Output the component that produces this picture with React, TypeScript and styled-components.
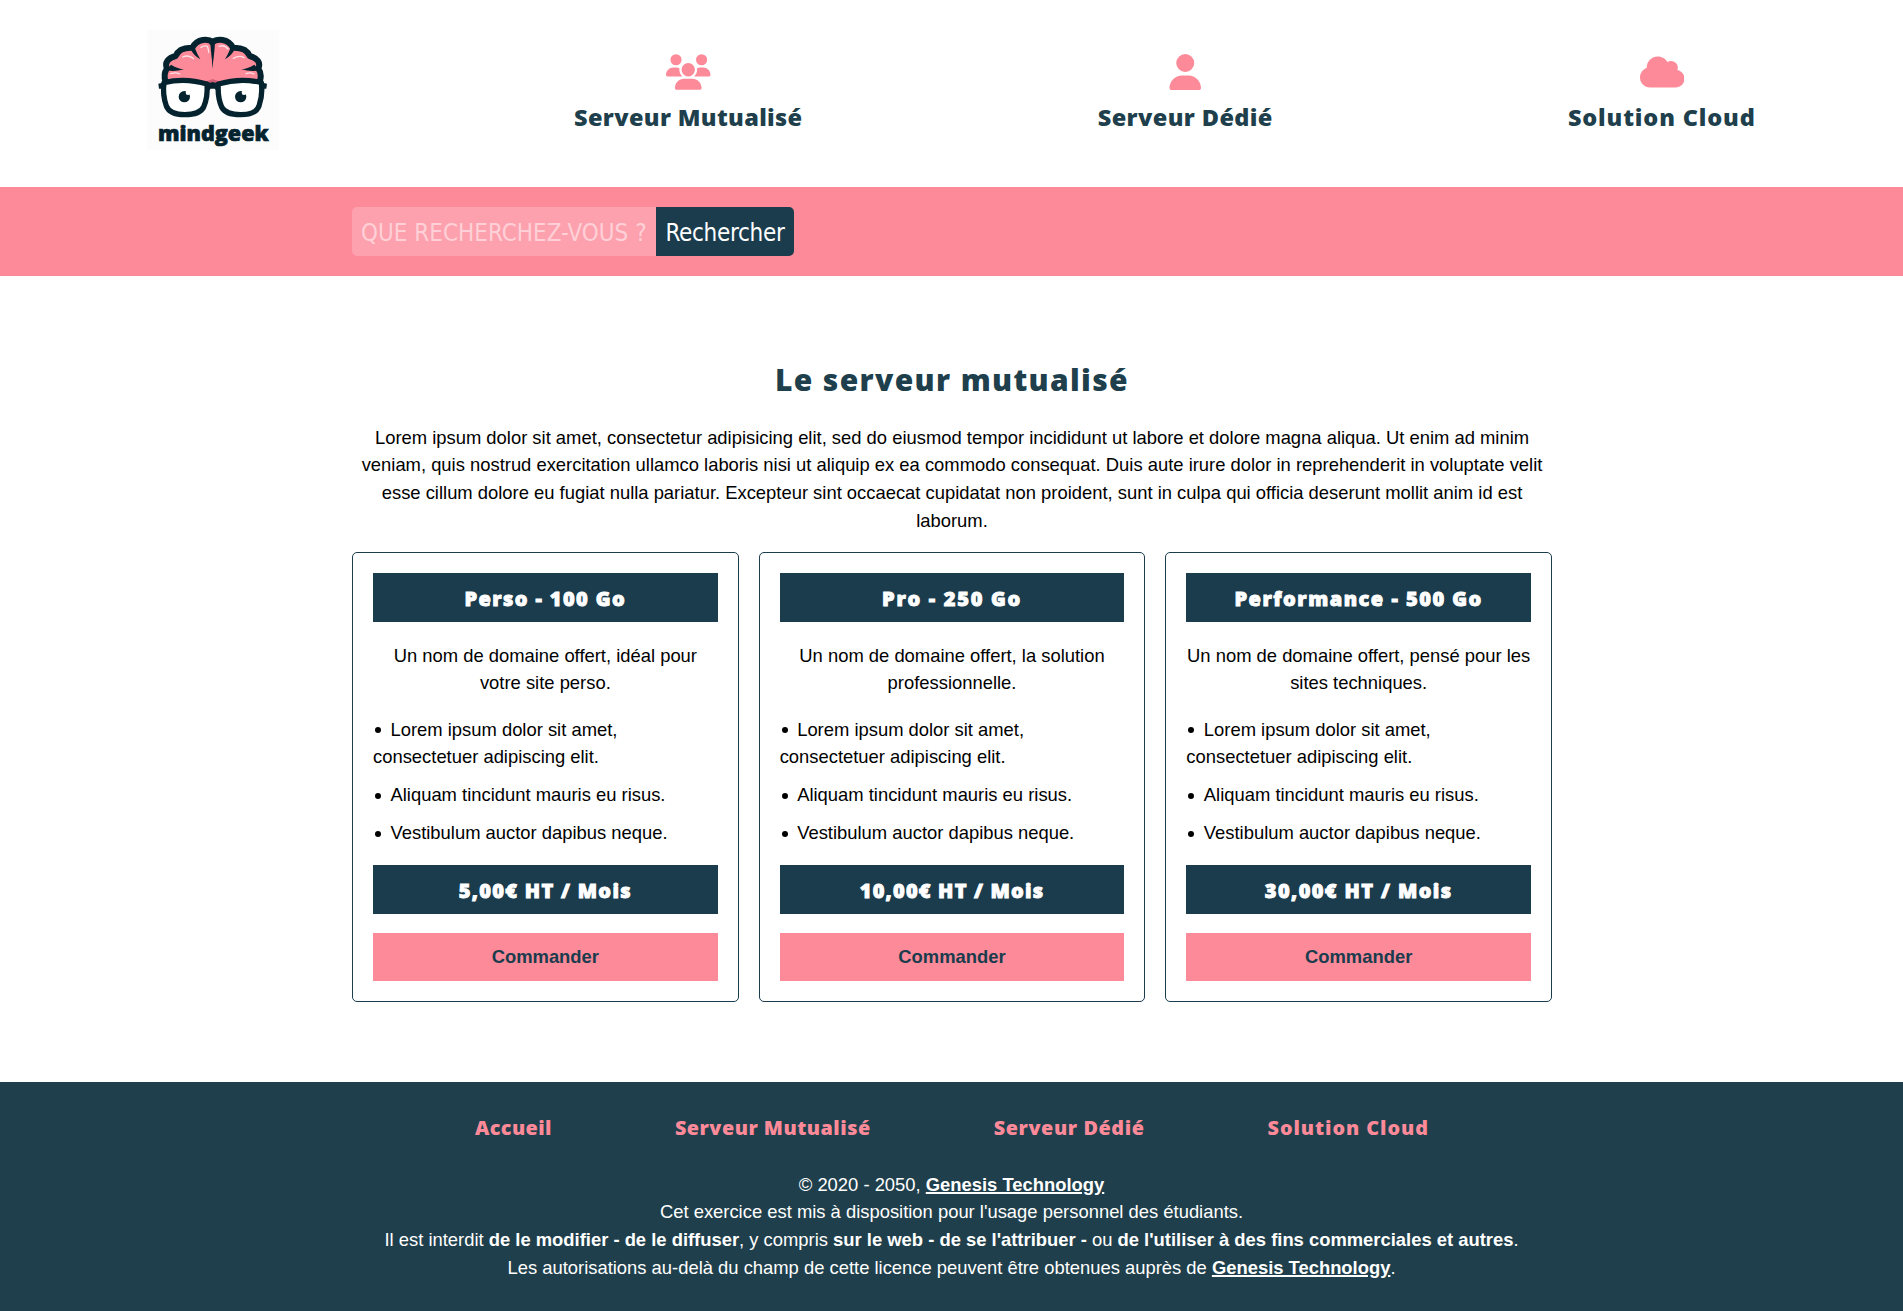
import React from "react";
import styled, { createGlobalStyle } from "styled-components";
import { FaUsers, FaUser, FaCloud } from "react-icons/fa6";

const pink = "#fc8a99";
const navy = "#1a3c4d";
const slate = "#203f4c";
const ink = "#05232f";

const GlobalStyle = createGlobalStyle`
  * { box-sizing: border-box; }
  body {
    margin: 0;
    background: #fff;
    color: #000;
    font-family: "Liberation Sans", Arial, sans-serif;
    font-size: 18.4px;
    line-height: 27.6px;
  }
`;

const Page = styled.div`
  display: flex;
  flex-direction: column;
`;

const Header = styled.header`
  height: 187px;
  padding: 30px 0;
  display: flex;
  justify-content: space-around;
`;

const LogoImage = styled.svg`
  display: block;
  width: 132px;
  height: 120px;
`;

const NavItem = styled.a<{ $width: number; $spacing: number }>`
  width: ${(p) => p.$width}px;
  padding-top: 24px;
  display: flex;
  flex-direction: column;
  align-items: center;
  gap: 10px;
  color: ${pink};
  text-decoration: none;
  letter-spacing: ${(p) => p.$spacing}px;
  svg {
    display: block;
    height: 36px;
    width: 44.5px;
  }
`;

const NavLabel = styled.span`
  color: ${slate};
  font: 800 23.5px/34px "Open Sans", sans-serif;
  white-space: nowrap;
`;

const SearchBar = styled.section`
  height: 89px;
  padding: 20px 0;
  background: ${pink};
`;

const Container = styled.div`
  width: 1201px;
  margin: 0 auto;
  padding-left: 1px;
`;

const SearchForm = styled.form`
  display: flex;
`;

const SearchInput = styled.input`
  width: 304px;
  height: 49px;
  padding: 2px 9px 0;
  border: 0;
  border-radius: 5px 0 0 5px;
  background: rgba(255, 255, 255, 0.2);
  font: 24px "DejaVu Sans Condensed", "Noto Sans", sans-serif;
  &::placeholder {
    color: #ffd0d7;
    opacity: 1;
  }
`;

const SearchButton = styled.button`
  width: 138px;
  height: 49px;
  padding: 2px 0 0;
  border: 0;
  border-radius: 0 5px 5px 0;
  background: ${navy};
  color: #fff;
  font: 24px "DejaVu Sans Condensed", "Noto Sans", sans-serif;
  letter-spacing: -0.3px;
`;

const Main = styled.main`
  width: 1201px;
  margin: 0 auto;
  padding: 82px 0 80px 1px;
`;

const Title = styled.h1`
  margin: 0 0 21.8px;
  color: ${slate};
  font: 800 30px/44px "Open Sans", sans-serif;
  letter-spacing: 1.35px;
  text-align: center;
`;

const Intro = styled.p`
  margin: 0 0 17.8px;
  text-align: center;
`;

const Cards = styled.div`
  display: grid;
  grid-template-columns: repeat(3, 1fr);
  gap: 20px;
`;

const Card = styled.article`
  height: 450px;
  padding: 20px;
  border: 1px solid ${navy};
  border-radius: 5px;
`;

const Band = styled.h2<{ $spacing: number }>`
  height: 49px;
  margin: 0;
  padding-top: 3px;
  background: ${navy};
  color: #fff;
  font: 800 20px/46px "Open Sans", sans-serif;
  letter-spacing: ${(p) => p.$spacing}px;
  -webkit-text-stroke: 0.9px #fff;
  text-align: center;
`;

const Pitch = styled.p`
  margin: 19.6px 0 19px;
  text-align: center;
`;

const Features = styled.ul`
  margin: 0 0 18.2px;
  padding: 0;
  list-style: none;
  display: flex;
  flex-direction: column;
  gap: 10.3px;
  li::before {
    content: "";
    display: inline-block;
    width: 6px;
    height: 6px;
    margin: 0 9.5px 2.5px 2px;
    border-radius: 50%;
    background: #000;
  }
`;

const Order = styled.a`
  display: block;
  margin-top: 19px;
  background: ${pink};
  color: ${navy};
  font-weight: 700;
  line-height: 48px;
  text-align: center;
`;

const Footer = styled.footer`
  height: 229px;
  padding-top: 32px;
  background: ${slate};
  color: #fff;
`;

const FooterNav = styled.nav`
  height: 28px;
  margin-bottom: 28.8px;
  display: flex;
  justify-content: space-evenly;
`;

const FooterLink = styled.a<{ $spacing: number }>`
  color: ${pink};
  font: 800 19.8px/28px "Open Sans", sans-serif;
  letter-spacing: ${(p) => p.$spacing}px;
`;

const Legal = styled.p`
  margin: 0 1px 0 0;
  text-align: center;
`;

const LegalLink = styled.a`
  font-weight: 700;
  text-decoration: underline;
  text-decoration-thickness: 2px;
`;

/* One half of the face; the other half is mirrored around the bridge. */
function BrainHalf() {
  return (
    <>
      <path
        d="M250 208V82C236 70 200 72 190 98C168 96 152 104 147 120C122 124 108 142 116 162C104 170 102 184 108 204Z"
        fill={pink}
      />
      <path d="M108 205Q135 194 180 196Q225 204 250 192V208Z" fill="#cf5f78" />
      <path
        d="M250 82C234 70 202 70 187 98C164 97 144 105 137 123C114 128 103 144 111 160C103 172 101 184 107 200"
        fill="none"
        stroke={ink}
        strokeWidth="18"
        strokeLinejoin="round"
        strokeLinecap="round"
      />
      <path d="M182 103L194 98Q202 118 211 133Q190 121 182 103Z" fill={ink} />
      <path d="M110 164L123 149Q145 162 162 163Q135 171 110 166Z" fill={ink} />
      <path d="M241 84H250V161Q244 130 241 84Z" fill={ink} />
    </>
  );
}

function GlassesHalf() {
  return (
    <>
      <path
        d="M102 203Q165 187 231 207Q234 246 221 276Q210 299 164 299Q119 299 109 273Q97 238 102 203Z"
        fill="#fff"
        stroke={ink}
        strokeWidth="16"
        strokeLinejoin="round"
      />
      <path d="M85 206L108 201V225L99 221H87Z" fill={ink} />
      <path d="M231 206Q240 203 250 203V219Q242 219 235 226Z" fill={ink} stroke={ink} strokeWidth="2" />
    </>
  );
}

function Logo() {
  return (
    <LogoImage viewBox="51 45 396 360" role="img" aria-label="mindgeek">
      <rect x="51" y="45" width="396" height="360" fill="#fcfcfc" />
      <BrainHalf />
      <g transform="translate(496 0) scale(-1 1)">
        <BrainHalf />
      </g>
      <g fill="none" stroke="#fff" strokeWidth="4" strokeLinecap="round" opacity="0.75">
        <path d="M213 97Q224 90 232 94Q236 104 236 112" />
        <path d="M158 126Q176 118 191 131" />
        <path d="M122 176Q138 171 149 177" />
        <path d="M267 94Q284 88 294 102" />
        <path d="M310 130Q328 119 342 128" />
        <path d="M348 176Q360 171 372 177" />
      </g>
      <GlassesHalf />
      <g transform="translate(496 0) scale(-1 1)">
        <GlassesHalf />
      </g>
      <circle cx="163" cy="245" r="17" fill={ink} />
      <circle cx="174" cy="233" r="7" fill="#fff" />
      <circle cx="332" cy="245" r="17" fill={ink} />
      <circle cx="342" cy="233" r="7" fill="#fff" />
      <text
        x="84"
        y="377"
        textLength="332"
        lengthAdjust="spacingAndGlyphs"
        fill={ink}
        stroke={ink}
        strokeWidth="2"
        fontFamily="Open Sans, sans-serif"
        fontWeight="800"
        fontSize="61"
      >
        mindgeek
      </text>
    </LogoImage>
  );
}

const offers = [
  { name: "Perso - 100 Go", nameSpacing: 1.4, pitch: "Un nom de domaine offert, idéal pour votre site perso.", price: "5,00€ HT / Mois", priceSpacing: 1.3 },
  { name: "Pro - 250 Go", nameSpacing: 1.7, pitch: "Un nom de domaine offert, la solution professionnelle.", price: "10,00€ HT / Mois", priceSpacing: 1.2 },
  { name: "Performance - 500 Go", nameSpacing: 1.5, pitch: "Un nom de domaine offert, pensé pour les sites techniques.", price: "30,00€ HT / Mois", priceSpacing: 1.4 },
];

export default function App() {
  return (
    <Page>
      <GlobalStyle />
      <Header>
        <Logo />
        <NavItem $width={229} $spacing={0.35}>
          <FaUsers />
          <NavLabel>Serveur Mutualisé</NavLabel>
        </NavItem>
        <NavItem $width={176} $spacing={0.4}>
          <FaUser />
          <NavLabel>Serveur Dédié</NavLabel>
        </NavItem>
        <NavItem $width={188} $spacing={0.85}>
          <FaCloud />
          <NavLabel>Solution Cloud</NavLabel>
        </NavItem>
      </Header>
      <SearchBar>
        <Container>
          <SearchForm>
            <SearchInput placeholder="QUE RECHERCHEZ-VOUS ?" />
            <SearchButton type="button">Rechercher</SearchButton>
          </SearchForm>
        </Container>
      </SearchBar>
      <Main>
        <Title>Le serveur mutualisé</Title>
        <Intro>
          Lorem ipsum dolor sit amet, consectetur adipisicing elit, sed do eiusmod tempor incididunt ut labore et dolore
          magna aliqua. Ut enim ad minim veniam, quis nostrud exercitation ullamco laboris nisi ut aliquip ex ea commodo
          consequat. Duis aute irure dolor in reprehenderit in voluptate velit esse cillum dolore eu fugiat nulla
          pariatur. Excepteur sint occaecat cupidatat non proident, sunt in culpa qui officia deserunt mollit anim id
          est laborum.
        </Intro>
        <Cards>
          {offers.map((offer) => (
            <Card key={offer.name}>
              <Band $spacing={offer.nameSpacing}>{offer.name}</Band>
              <Pitch>{offer.pitch}</Pitch>
              <Features>
                <li>Lorem ipsum dolor sit amet, consectetuer adipiscing elit.</li>
                <li>Aliquam tincidunt mauris eu risus.</li>
                <li>Vestibulum auctor dapibus neque.</li>
              </Features>
              <Band as="h3" $spacing={offer.priceSpacing}>{offer.price}</Band>
              <Order>Commander</Order>
            </Card>
          ))}
        </Cards>
      </Main>
      <Footer>
        <Container>
          <FooterNav>
            <FooterLink $spacing={0.4}>Accueil</FooterLink>
            <FooterLink $spacing={0.5}>Serveur Mutualisé</FooterLink>
            <FooterLink $spacing={0.6}>Serveur Dédié</FooterLink>
            <FooterLink $spacing={0.95}>Solution Cloud</FooterLink>
          </FooterNav>
          <Legal>
            © 2020 - 2050, <LegalLink>Genesis Technology</LegalLink>
            <br />
            Cet exercice est mis à disposition pour l'usage personnel des étudiants.
            <br />
            Il est interdit <b>de le modifier - de le diffuser</b>, y compris <b>sur le web - de se l'attribuer -</b> ou{" "}
            <b>de l'utiliser à des fins commerciales et autres</b>.
            <br />
            Les autorisations au-delà du champ de cette licence peuvent être obtenues auprès de{" "}
            <LegalLink>Genesis Technology</LegalLink>.
          </Legal>
        </Container>
      </Footer>
    </Page>
  );
}
